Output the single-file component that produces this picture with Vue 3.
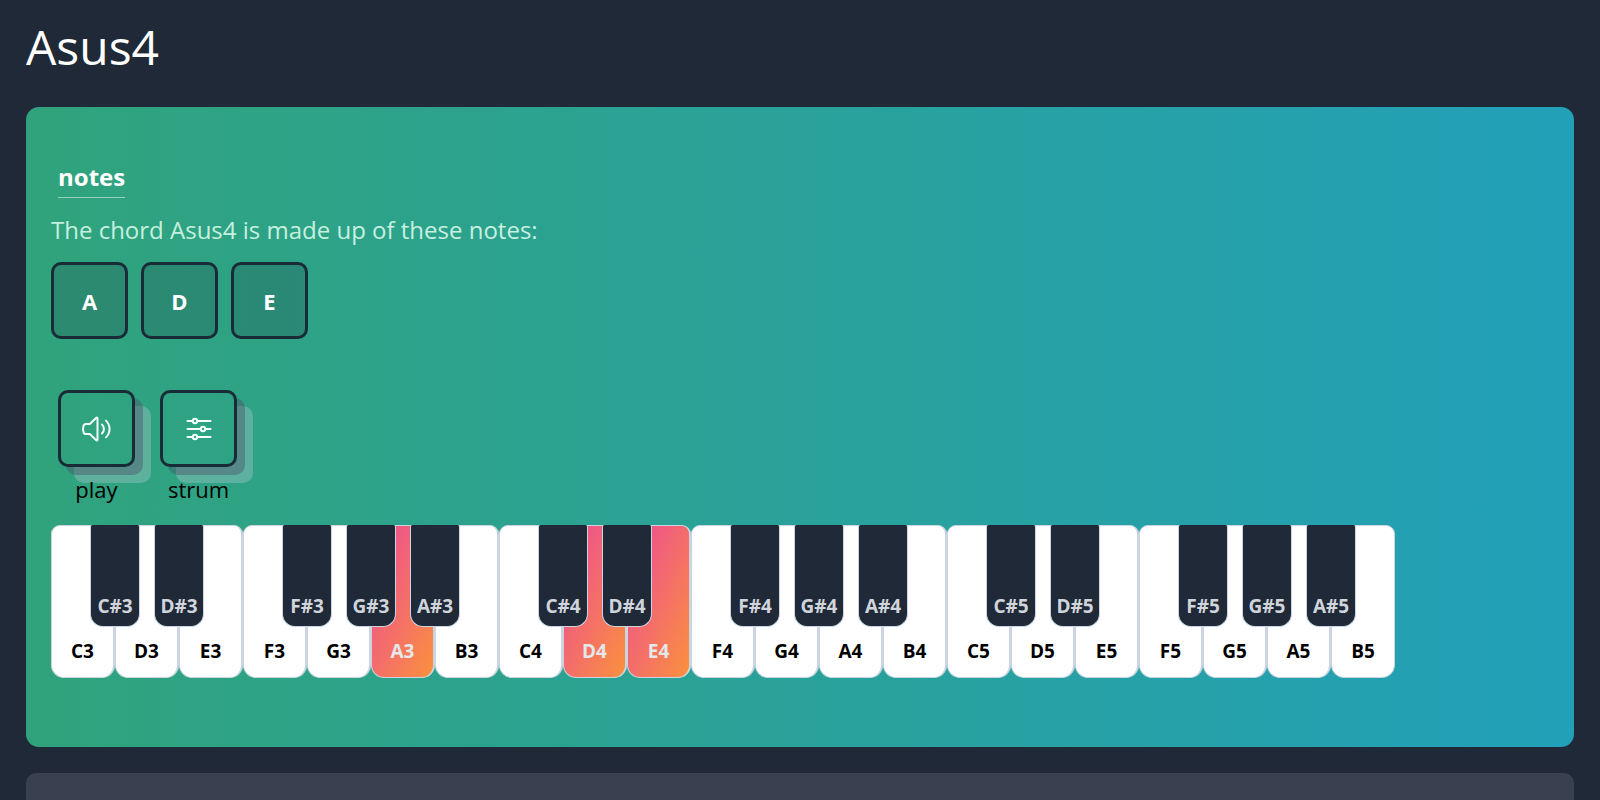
<script setup>
const chord = 'Asus4'
const notes = ['A', 'D', 'E']
const active = ['A3', 'D4', 'E4']
const withSharp = ['C', 'D', 'F', 'G', 'A']

const keys = [3, 4, 5].flatMap((octave) =>
  ['C', 'D', 'E', 'F', 'G', 'A', 'B'].map((note) => ({
    name: note + octave,
    sharp: withSharp.includes(note) ? `${note}#${octave}` : null,
  })),
)
</script>

<template>
  <main class="page">
    <h1 class="title">{{ chord }}</h1>

    <section class="card">
      <h2 class="heading">notes</h2>
      <p class="intro">The chord {{ chord }} is made up of these notes:</p>
      <ul class="notes">
        <li v-for="note in notes" :key="note">
          <button type="button" class="tile note">{{ note }}</button>
        </li>
      </ul>

      <div class="actions">
        <div class="action">
          <button type="button" class="tile raised" aria-labelledby="play-label">
            <svg viewBox="0 0 30 26" width="30" height="26" aria-hidden="true">
              <path d="M14.300 1.800c.5-.5 1.200-.2 1.200.5v21.400c0 .7-.7 1-1.200.5l-6.500-6.200H3.700c-1 0-1.600-.5-2-1.300-1-2.300-1-5.100 0-7.400.4-.8 1-1.300 2-1.300H7.800zM20 8.500c2.600 2.500 2.600 6.500 0 9M24 4.600c4.700 4.700 4.700 12.100 0 16.800" />
            </svg>
          </button>
          <span id="play-label" class="caption">play</span>
        </div>
        <div class="action">
          <button type="button" class="tile raised" aria-labelledby="strum-label">
            <svg viewBox="0 0 26 24" width="26" height="24" aria-hidden="true">
              <path d="M1.500 4H6.500M11.500 4H24.500M1.500 12H14.500M19.500 12H24.500M1.500 20H6.500M11.500 20H24.500" />
              <circle cx="9" cy="4" r="2.200" />
              <circle cx="17" cy="12" r="2.200" />
              <circle cx="9" cy="20" r="2.200" />
            </svg>
          </button>
          <span id="strum-label" class="caption">strum</span>
        </div>
      </div>

      <ul class="piano">
        <li v-for="key in keys" :key="key.name" class="slot">
          <button type="button" class="white" :class="{ active: active.includes(key.name) }">
            {{ key.name }}
          </button>
          <button v-if="key.sharp" type="button" class="black">{{ key.sharp }}</button>
        </li>
      </ul>
    </section>

    <section class="panel"></section>
  </main>
</template>

<style>
html,
body {
  margin: 0;
  background: #1f2937;
}
</style>

<style scoped>
.page {
  box-sizing: border-box;
  padding: 13px 26px 0;
  font-family: 'Open Sans', 'Noto Sans', sans-serif;
  color: #000;
}
.title {
  margin: 0 0 26px;
  font-size: 48px;
  line-height: 68px;
  font-weight: 400;
  color: #fff;
}
.card {
  box-sizing: border-box;
  min-height: 640px;
  padding: 52px 25px 0;
  border-radius: 13px;
  background: linear-gradient(to right, #30a37c, #22a0b8);
}
.heading {
  width: fit-content;
  margin: 0 0 0 7px;
  padding-bottom: 2px;
  border-bottom: 1px solid rgba(255, 255, 255, 0.5);
  font-size: 24px;
  line-height: 36px;
  font-weight: 700;
  color: #fff;
}
.intro {
  margin: 12px 0;
  font-size: 24px;
  line-height: 40px;
  color: #c6f0df;
}
.notes,
.piano {
  display: flex;
  margin: 0;
  padding: 0;
  list-style: none;
}
.notes {
  gap: 13px;
}
button {
  padding: 0;
  font-family: inherit;
  cursor: pointer;
}
.tile {
  box-sizing: border-box;
  display: flex;
  align-items: center;
  justify-content: center;
  width: 77px;
  height: 77px;
  border: 3px solid #1a2b38;
  border-radius: 10px;
  background: transparent;
  color: #fff;
}
.note {
  background: rgba(31, 41, 55, 0.2);
  font-size: 22px;
  font-weight: 700;
}
.actions {
  display: flex;
  gap: 25px;
  margin: 51px 7px 0;
}
.action {
  display: flex;
  flex-direction: column;
  align-items: center;
  width: 77px;
}
.raised {
  box-shadow:
    8px 8px 0 rgba(75, 75, 100, 0.4),
    16px 16px 0 rgba(203, 213, 225, 0.3);
}
.raised svg {
  overflow: visible;
  fill: none;
  stroke: #f3fffb;
  stroke-width: 2;
  stroke-linecap: round;
  stroke-linejoin: round;
}
.caption {
  margin-top: 6px;
  font-size: 22px;
  line-height: 32px;
}
.piano {
  margin-top: 20px;
}
.slot {
  position: relative;
  width: 64px;
}
.white,
.black {
  box-sizing: border-box;
  display: flex;
  align-items: flex-end;
  justify-content: center;
  border: 1px solid #cbd5e1;
  font-size: 19px;
  line-height: 28px;
  font-weight: 700;
}
.white {
  width: 64px;
  height: 153px;
  padding-bottom: 12px;
  border-right-width: 2px;
  border-radius: 9px 9px 13px 13px;
  background: #fff;
  color: #000;
}
.slot:last-child .white {
  border-right-width: 1px;
}
.white.active {
  background: linear-gradient(to bottom right, #ec4899, #fb923c) border-box;
  color: #e5e7eb;
}
.black {
  position: absolute;
  z-index: 1;
  top: 0;
  right: -25px;
  width: 50px;
  height: 102px;
  padding-bottom: 6px;
  border-top: 0;
  border-radius: 2px 2px 13px 13px;
  background: #1f2937;
  color: #d1d5db;
}
.panel {
  min-height: 200px;
  margin-top: 26px;
  border-radius: 10px;
  background: #394150;
}
</style>
